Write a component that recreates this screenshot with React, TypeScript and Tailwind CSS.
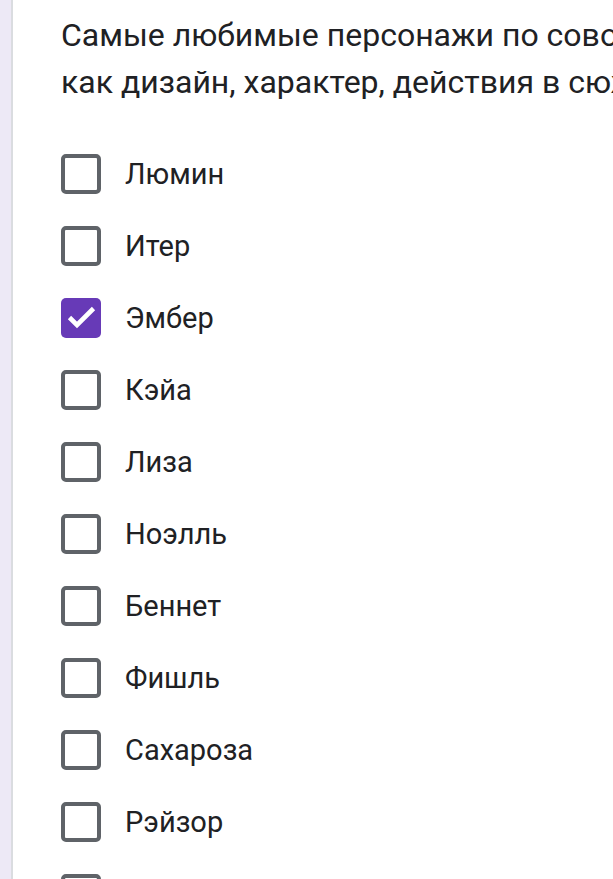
import React from 'react';

const NAMES = ['Люмин', 'Итер', 'Эмбер', 'Кэйа', 'Лиза', 'Ноэлль', 'Беннет', 'Фишль', 'Сахароза', 'Рэйзор', 'Барбара'];
const CHECKED = ['Эмбер'];

function Box({ checked }: { checked: boolean }) {
  if (checked) {
    return (
      <div className="w-10 h-10 rounded-[5px] bg-[#673ab7] shrink-0">
        <svg width="40" height="40" viewBox="0 0 40 40" fill="none" stroke="white" strokeWidth="4.6" strokeLinecap="butt" strokeLinejoin="miter">
          <path d="M8.5 19.5l7.5 7.5L32.5 10.5"/>
        </svg>
      </div>
    );
  }
  return <div className="w-10 h-10 rounded-[5px] border-4 border-[#5f6368] shrink-0" />;
}

export default function App() {
  return (
    <div className="flex h-[879px] overflow-hidden bg-white" style={{ fontFamily: 'Roboto, "Noto Sans", sans-serif' }}>
      <div className="w-[11px] bg-[#ede9f6] shrink-0" />
      <div className="w-[2px] bg-[#dadce0] shrink-0" />
      <div className="flex-1 min-w-0 overflow-hidden pl-12 pt-[12px]">
        <div className="text-[32px] leading-[47px] text-[#202124] whitespace-nowrap">
          <div>Самые любимые персонажи по совокупности таких факторов,</div>
          <div>как дизайн, характер, действия в сюжете и т.д.</div>
        </div>
        <div className="mt-[48px] flex flex-col gap-8">
          {NAMES.map(n => (
            <div key={n} className="flex items-center gap-6 h-10">
              <Box checked={CHECKED.includes(n)} />
              <span className="text-[29px] text-[#202124] leading-10">{n}</span>
            </div>
          ))}
        </div>
      </div>
    </div>
  );
}
